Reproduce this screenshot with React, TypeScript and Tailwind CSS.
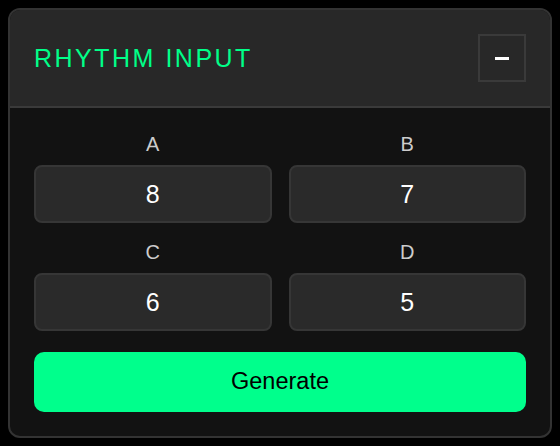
import { useState } from 'react';

const fields = [
  { key: 'A', value: '8' },
  { key: 'B', value: '7' },
  { key: 'C', value: '6' },
  { key: 'D', value: '5' },
];

export default function App() {
  const [values, setValues] = useState<Record<string, string>>(
    Object.fromEntries(fields.map(f => [f.key, f.value]))
  );

  return (
    <div
      className="min-h-screen bg-black p-2"
      style={{ fontFamily: '"Liberation Sans", Arial, sans-serif' }}
    >
      <div className="overflow-hidden rounded-xl border-2 border-[#333333] bg-[#121212]">
        <div className="flex items-center justify-between border-b-2 border-[#3a3a3a] bg-[#282828] p-6">
          <h1 className="text-[25px] leading-[30px] tracking-[0.1em] text-[#00ff88]">RHYTHM INPUT</h1>
          <button
            type="button"
            className="flex h-12 w-12 items-center justify-center border-2 border-[#3a3a3a]"
          >
            <span className="block h-[3px] w-[14px] bg-white" />
          </button>
        </div>

        <div className="flex flex-col p-6">
          <div className="grid grid-cols-2 gap-x-[17px] gap-y-[17px]">
            {fields.map(f => (
              <label key={f.key} className="flex flex-col items-center">
                <span className="mb-[9px] text-[20px] leading-6 text-[#cccccc]">{f.key}</span>
                <input
                  value={values[f.key]}
                  onChange={e => setValues({ ...values, [f.key]: e.target.value })}
                  className="h-[58px] w-full rounded-lg border-2 border-[#363636] bg-[#2a2a2a] text-center text-[25px] text-white outline-none"
                />
              </label>
            ))}
          </div>

          <button
            type="button"
            className="mt-[21px] h-[60px] w-full rounded-[10px] bg-[#00ff8c] text-[23.5px] text-black"
          >
            Generate
          </button>
        </div>
      </div>
    </div>
  );
}
